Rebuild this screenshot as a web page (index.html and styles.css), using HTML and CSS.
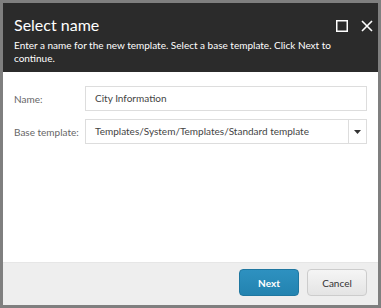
FILE: index.html
```html
<!DOCTYPE html>
<html lang="en">
<head>
  <meta charset="UTF-8">
  <title>Select name</title>
  <link rel="stylesheet" href="styles.css">
</head>
<body>
  <div class="dialog">
    <!-- Header -->
    <div class="dialog-header">
      <div class="header-text">
        <h1>Select name</h1>
        <p>Enter a name for the new template. Select a base template. Click Next to continue.</p>
      </div>
      <div class="header-icons">
        <svg width="12" height="12" viewBox="0 0 12 12"><rect x="0.75" y="0.75" width="10.5" height="10.5" fill="none" stroke="#fff" stroke-width="1.5"/></svg>
        <svg width="12" height="12" viewBox="0 0 12 12"><path d="M1 1 L11 11 M11 1 L1 11" stroke="#fff" stroke-width="1.6"/></svg>
      </div>
    </div>

    <!-- Form -->
    <div class="dialog-body">
      <div class="row">
        <label>Name:</label>
        <div class="field">City Information</div>
      </div>
      <div class="row">
        <label>Base template:</label>
        <div class="field select">
          <span class="value">Templates/System/Templates/Standard template</span>
          <span class="arrow"><svg width="7" height="4" viewBox="0 0 7 4"><path d="M0 0 H7 L3.5 4 Z" fill="#333"/></svg></span>
        </div>
      </div>
    </div>

    <!-- Footer -->
    <div class="dialog-footer">
      <button class="btn btn-primary">Next</button>
      <button class="btn">Cancel</button>
    </div>
  </div>
</body>
</html>
```

FILE: styles.css
```css
body {
  margin: 0;
  padding: 3px;
  background-color: #7f7f7f;
  font-family: Lato, sans-serif;
  color: #333;
}
.dialog {
  width: 375px;
  height: 302px;
  display: flex;
  flex-direction: column;
  background-color: #fff;
}
.dialog-header {
  height: 69px;
  box-sizing: border-box;
  background-color: #2b2b2b;
  color: #fff;
  display: flex;
  justify-content: space-between;
  padding: 12px 14px 0 11px;
}
.dialog-header h1 {
  margin: 0;
  font-size: 16px;
  font-weight: normal;
  line-height: 20px;
}
.dialog-header p {
  margin: 4px 0 0;
  font-size: 10px;
  line-height: 13px;
  width: 322px;
}
.header-icons {
  display: flex;
  gap: 13px;
  padding-top: 5px;
}
.dialog-body {
  flex: 1;
  padding: 14px 11px 0 11px;
  display: flex;
  flex-direction: column;
  gap: 8px;
}
.row {
  display: flex;
  align-items: center;
}
.row label {
  width: 71px;
  font-size: 10px;
  color: #666;
}
.field {
  flex: 1;
  height: 25px;
  box-sizing: border-box;
  border: 1px solid #ddd;
  padding: 0 9px;
  font-size: 10px;
  line-height: 23px;
  color: #444;
}
.select {
  display: flex;
  padding-right: 0;
}
.select .value {
  flex: 1;
}
.select .arrow {
  width: 17px;
  border-left: 1px solid #ddd;
  display: flex;
  align-items: center;
  justify-content: center;
}
.dialog-footer {
  height: 43px;
  box-sizing: border-box;
  background-color: #eee;
  border-top: 1px solid #e6e6e6;
  display: flex;
  justify-content: flex-end;
  gap: 8px;
  padding: 6px 11px 0 0;
}
.btn {
  width: 60px;
  height: 27px;
  border: 1px solid #ccc;
  border-radius: 4px;
  background: linear-gradient(#f5f5f5, #e4e4e4);
  font-family: Lato, sans-serif;
  font-size: 10px;
  color: #333;
}
.btn-primary {
  background: linear-gradient(#2e91c0, #2383b0);
  border-color: #1f77a0;
  color: #fff;
  font-weight: bold;
}
```
